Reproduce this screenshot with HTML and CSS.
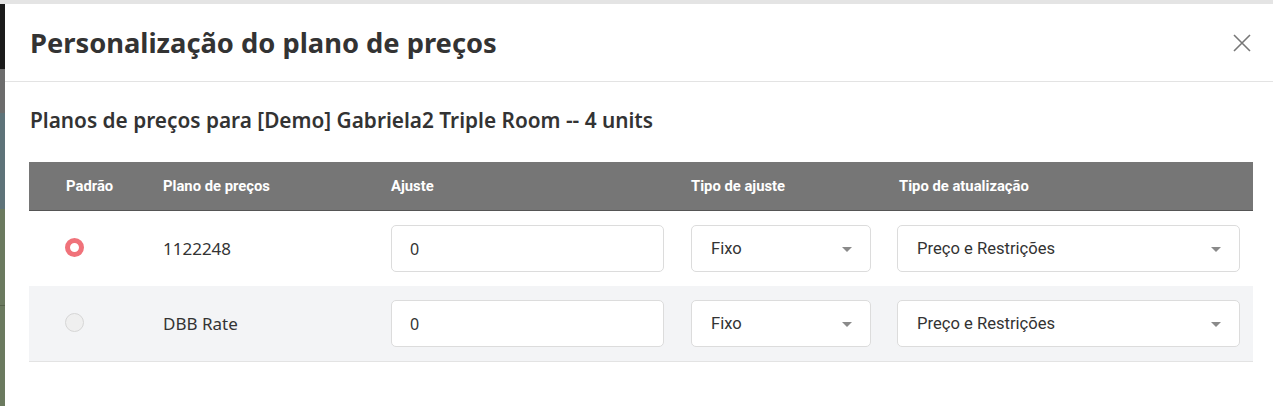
FILE: index.html
```html
<!DOCTYPE html>
<html lang="pt">
<head>
  <meta charset="UTF-8" />
  <meta name="viewport" content="width=device-width, initial-scale=1.0"/>
  <title>Personalização do plano de preços</title>
  <link rel="stylesheet" href="styles.css">
</head>
<body>
  <div class="page">
    <div class="backdrop">
      <div class="bd-dark"></div>
      <div class="bd-grey"></div>
      <div class="bd-blue"></div>
      <div class="bd-green"></div>
      <div class="bd-green bd-last"></div>
    </div>

    <div class="modal">
      <div class="modal-header">
        <h1>Personalização do plano de preços</h1>
        <button class="close-btn" aria-label="Fechar">
          <svg width="18" height="18" viewBox="0 0 18 18">
            <path d="M1 1 L17 17 M17 1 L1 17" stroke="#777" stroke-width="1.6" fill="none"/>
          </svg>
        </button>
      </div>

      <div class="modal-body">
        <h2>Planos de preços para [Demo] Gabriela2 Triple Room -- 4 units</h2>

        <div class="plans">
          <div class="plans-row plans-head">
            <div>Padrão</div>
            <div>Plano de preços</div>
            <div>Ajuste</div>
            <div>Tipo de ajuste</div>
            <div class="head-last">Tipo de atualização</div>
          </div>

          <div class="plans-row">
            <div><span class="radio checked"></span></div>
            <div class="plan-name">1122248</div>
            <div><input class="field" type="text" value="0"></div>
            <div><div class="select small">Fixo<span class="caret"></span></div></div>
            <div><div class="select wide">Preço e Restrições<span class="caret"></span></div></div>
          </div>

          <div class="plans-row alt">
            <div><span class="radio"></span></div>
            <div class="plan-name">DBB Rate</div>
            <div><input class="field" type="text" value="0"></div>
            <div><div class="select small">Fixo<span class="caret"></span></div></div>
            <div><div class="select wide">Preço e Restrições<span class="caret"></span></div></div>
          </div>
        </div>
      </div>
    </div>
  </div>
</body>
</html>
```

FILE: styles.css
```css
body {
  margin: 0;
  font-family: 'Noto Sans', 'Open Sans', sans-serif;
  background: #e4e4e4;
  color: #333;
}

.page {
  display: flex;
  height: 402px;
  margin-top: 4px;
  overflow: hidden;
}

/* bit of the page behind the modal */
.backdrop {
  width: 5px;
  display: flex;
  flex-direction: column;
}

.bd-dark { height: 65px; background: #1b1b1b; }
.bd-grey { height: 44px; background: #6c6c6c; }
.bd-blue { height: 96px; background: #5e7379; }
.bd-green { height: 96px; background: #6b7a5f; border-bottom: 1px solid #56624b; }
.bd-last { flex: 1; border-bottom: none; }

.modal {
  flex: 1;
  background: #fff;
}

.modal-header {
  height: 78px;
  box-sizing: border-box;
  border-bottom: 1px solid #e3e3e3;
  display: flex;
  align-items: center;
  justify-content: space-between;
  padding: 0 22px 0 25px;
}

.modal-header h1 {
  margin: 0;
  font-size: 27.3px;
  font-weight: 700;
  color: #333;
}

.close-btn {
  background: none;
  border: none;
  padding: 0;
  margin-top: 1px;
  cursor: pointer;
  display: flex;
}

.modal-body {
  padding: 24px 15px 0 24px;
}

.modal-body h2 {
  margin: 0 0 28px 1px;
  font-size: 20.8px;
  font-weight: 600;
  color: #333;
}

.plans {
  width: 1224px;
  border-bottom: 1px solid #e3e3e3;
}

.plans-row {
  display: grid;
  grid-template-columns: 97px 228px 300px 206px 1fr;
  align-items: center;
  padding: 0 13px 0 37px;
  height: 75px;
}

.plans-head {
  height: 48px;
  background: #767676;
  border-bottom: 1px solid #555;
  color: #fff;
  font-family: Roboto, sans-serif;
  font-size: 14.8px;
  font-weight: 700;
}

.head-last {
  padding-left: 2px;
}

.alt {
  background: #f3f4f6;
}

.plan-name {
  font-size: 17px;
  color: #333;
}

.radio {
  display: block;
  width: 19px;
  height: 19px;
  box-sizing: border-box;
  border-radius: 50%;
  border: 1px solid #d6d6d6;
  background: #efefef;
  margin: 0 0 2px -1px;
}

.radio.checked {
  border: 5.5px solid #f0727a;
  background: #fff;
}

.field {
  width: 273px;
  height: 47px;
  box-sizing: border-box;
  border: 1px solid #dcdcdc;
  border-radius: 5px;
  padding: 0 18px;
  font-family: 'Noto Sans', sans-serif;
  font-size: 16px;
  color: #333;
  background: #fff;
}

.select {
  height: 47px;
  box-sizing: border-box;
  border: 1px solid #dcdcdc;
  border-radius: 5px;
  background: #fff;
  display: flex;
  align-items: center;
  justify-content: space-between;
  padding: 0 18px 0 19px;
  font-family: Roboto, sans-serif;
  font-size: 16.6px;
  color: #333;
}

.select.small { width: 180px; }
.select.wide { width: 343px; }

.caret {
  width: 0;
  height: 0;
  border-left: 5px solid transparent;
  border-right: 5px solid transparent;
  border-top: 5px solid #8a8a8a;
  margin-top: 2px;
}
```
